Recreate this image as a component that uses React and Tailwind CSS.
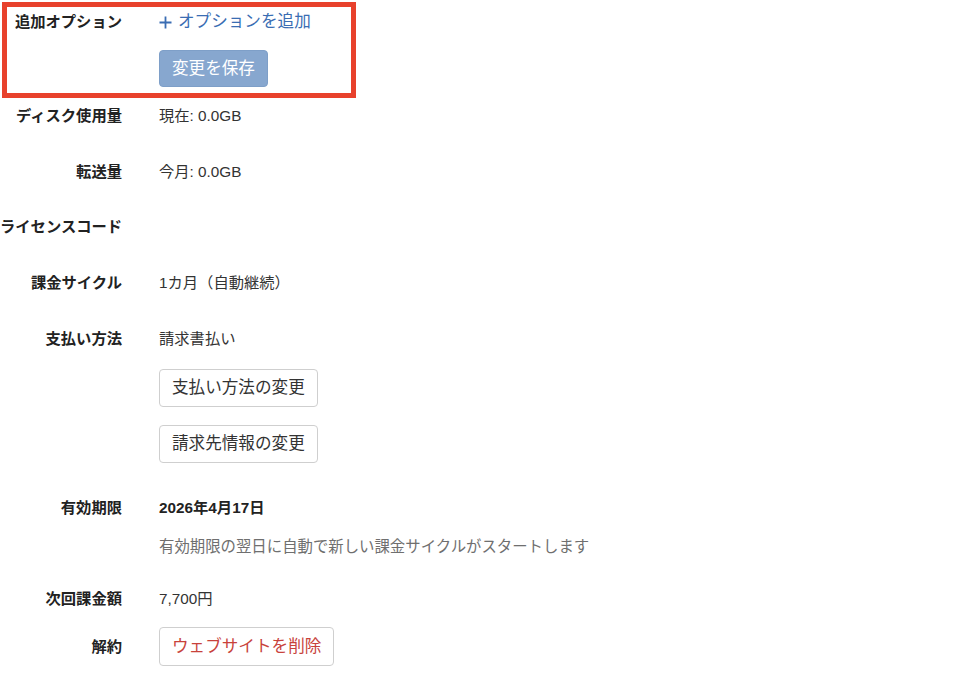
import React from "react";

const font = {
  fontFamily: '"Liberation Sans", "Noto Sans CJK JP", sans-serif',
};

function Row({ label, children, className = "", center = false }) {
  return (
    <div className={`flex ${center ? "items-center" : "items-start"} ${className}`}>
      <div className="w-[122px] shrink-0 text-right whitespace-nowrap font-bold text-[15.3px] leading-[22px] text-[#222]">
        {label}
      </div>
      <div className="ml-[37px] flex flex-col items-start text-[15.3px] leading-[22px] text-[#333]">
        {children}
      </div>
    </div>
  );
}

function OutlineButton({ children, className = "", textClass = "text-[#333]" }) {
  return (
    <button
      className={`flex items-center justify-center px-[12px] h-[38px] border border-[#cfcfcf] rounded-[4px] bg-white text-[16.6px] leading-[22px] ${textClass} ${className}`}
    >
      {children}
    </button>
  );
}

export default function App() {
  return (
    <div className="relative w-[960px] h-[675px] bg-white overflow-hidden" style={font}>
      <div className="pt-[11px]">
        <Row label="追加オプション">
          <a className="flex items-center text-[16.6px] leading-[22px] text-[#3a6db3]">
            <svg width="13" height="13" viewBox="0 0 13 13" className="mr-[6px]" aria-hidden="true">
              <path d="M6.5 0.5V12.5M0.5 6.5H12.5" stroke="#3a6db3" strokeWidth="1.8" fill="none" />
            </svg>
            オプションを追加
          </a>
          <button className="mt-[17px] h-[37px] px-[12px] flex items-center justify-center rounded-[4px] bg-[#87a7cf] border border-[#7e9fc8] text-white text-[16.6px] leading-[22px]">
            変更を保存
          </button>
        </Row>

        <Row label="ディスク使用量" className="mt-[18px]">
          <span>現在: 0.0GB</span>
        </Row>

        <Row label="転送量" className="mt-[34px]">
          <span>今月: 0.0GB</span>
        </Row>

        <Row label="ライセンスコード" className="mt-[33px]">
          <span></span>
        </Row>

        <Row label="課金サイクル" className="mt-[34px]">
          <span>1カ月（自動継続）</span>
        </Row>

        <Row label="支払い方法" className="mt-[34px]">
          <span>請求書払い</span>
          <OutlineButton className="mt-[19px]">支払い方法の変更</OutlineButton>
          <OutlineButton className="mt-[18px]">請求先情報の変更</OutlineButton>
        </Row>

        <Row label="有効期限" className="mt-[34px]">
          <span className="font-bold text-[#222]">2026年4月17日</span>
          <span className="mt-[17px] text-[15.4px] text-[#6f6f6f]">有効期限の翌日に自動で新しい課金サイクルがスタートします</span>
        </Row>

        <Row label="次回課金額" className="mt-[30px]">
          <span>7,700円</span>
        </Row>

        <Row label="解約" className="mt-[17px]" center>
          <OutlineButton className="h-[39px]" textClass="text-[#c8423b]">
            ウェブサイトを削除
          </OutlineButton>
        </Row>
      </div>

      <div className="absolute left-[2px] top-[2px] w-[354px] h-[96px] border-[5px] border-[#e8412c] pointer-events-none" />
    </div>
  );
}
